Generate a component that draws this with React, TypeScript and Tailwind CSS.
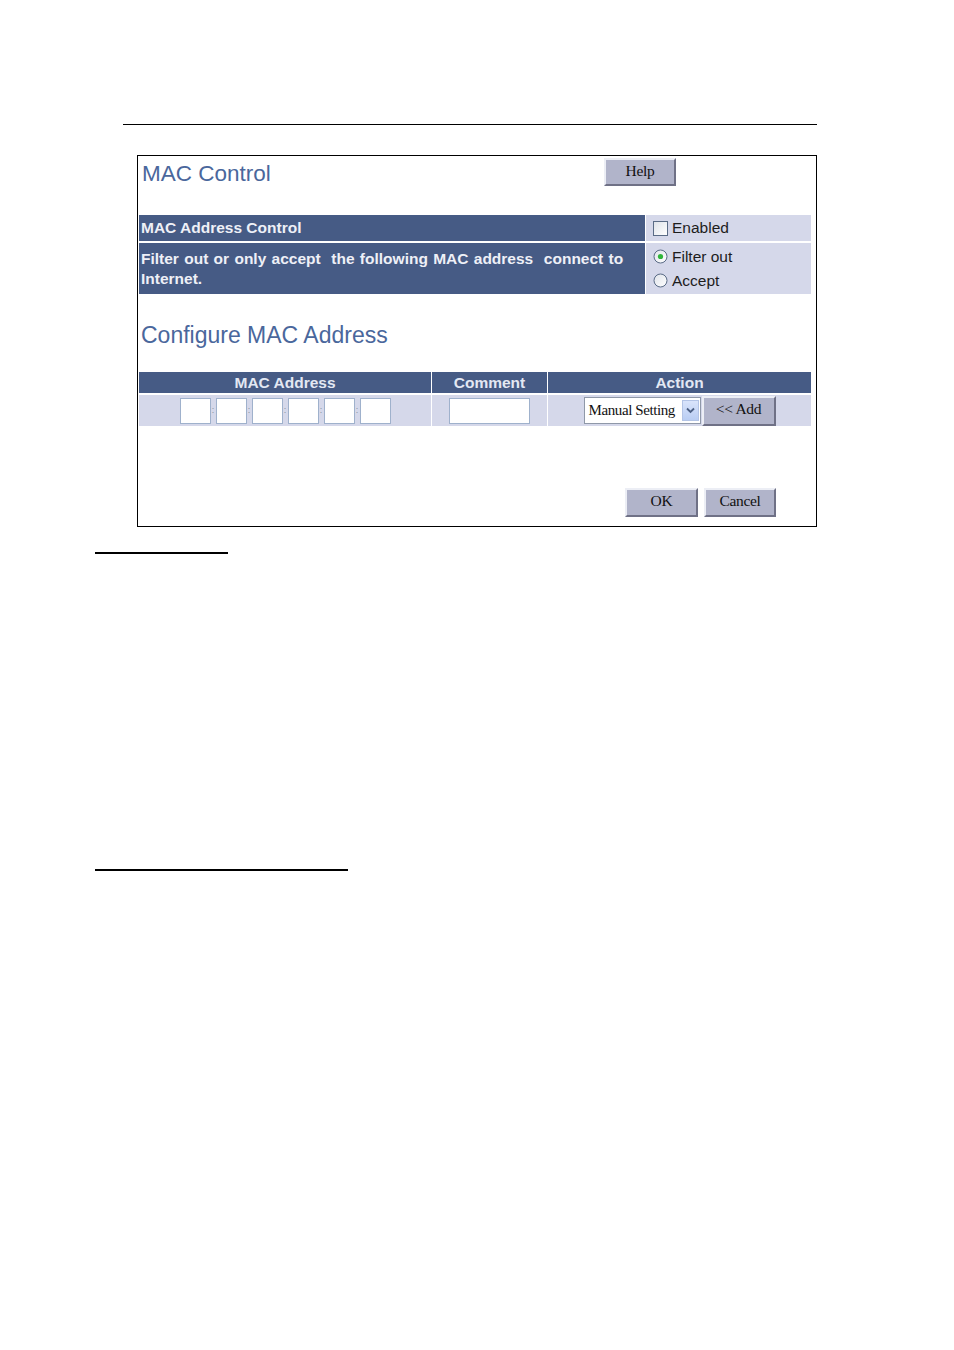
import React from "react";

const sans = { fontFamily: '"Liberation Sans", Arial, sans-serif' };
const serif = { fontFamily: '"Liberation Serif", "Times New Roman", serif' };

function Btn({ label, className = "" }: { label: string; className?: string }) {
  return (
    <div
      className={`flex items-center justify-center bg-[#b1b4ca] border-t-2 border-l-2 border-t-[#eceef5] border-l-[#eceef5] border-b-2 border-r-2 border-b-[#6f7186] border-r-[#6f7186] text-[15.5px] text-[#111] tracking-[-0.3px] ${className}`}
      style={serif}
    >
      {label}
    </div>
  );
}

function Radio({ checked }: { checked?: boolean }) {
  return (
    <svg width="15" height="15" viewBox="0 0 15 15" className="shrink-0">
      <defs>
        <linearGradient id={checked ? "rg1" : "rg2"} x1="0" y1="0" x2="1" y2="1">
          <stop offset="0" stopColor="#dfe3ea" />
          <stop offset="1" stopColor="#ffffff" />
        </linearGradient>
      </defs>
      <circle cx="7.5" cy="7.5" r="6.5" fill={`url(#${checked ? "rg1" : "rg2"})`} stroke="#5a6b86" strokeWidth="1" />
      {checked && <circle cx="7.5" cy="7.5" r="2.6" fill="#2fb53a" />}
    </svg>
  );
}

function MacBox() {
  return <div className="w-[31px] h-[26px] bg-white border border-[#9fb1cc]" />;
}

export default function App() {
  return (
    <div className="relative w-[954px] h-[1350px] bg-white overflow-hidden" style={sans}>
      <div className="pt-[124px]">
        <div className="ml-[123px] w-[694px] h-px bg-black" />
      </div>

      {/* main box */}
      <div className="mt-[30px] ml-[137px] w-[680px] h-[372px] border border-black flex flex-col">
        {/* title row */}
        <div className="flex h-[59px] items-start">
          <div className="w-[466px] pl-[4px] pt-[5px] text-[22.5px] leading-[26px] text-[#4a679c]">MAC Control</div>
          <Btn label="Help" className="w-[72px] h-[28px] mt-[2px] pb-[3px]" />
        </div>

        {/* table 1 */}
        <div className="ml-px w-[672px] flex flex-col gap-[2px]">
          <div className="flex gap-px h-[26px]">
            <div className="w-[506px] bg-[#465b85] text-[#eef0f7] font-bold text-[15.5px] pl-[2px] flex items-center">
              MAC Address Control
            </div>
            <div className="flex-1 bg-[#d5d8ea] flex items-center pl-[7px] gap-[4px] text-[15.5px] text-[#1d1d1d]">
              <div className="w-[15px] h-[15px] border border-[#5a6b86] bg-gradient-to-br from-[#dfe3ea] to-white" />
              <span>Enabled</span>
            </div>
          </div>
          <div className="flex gap-px h-[51px]">
            <div className="w-[506px] bg-[#465b85] text-[#eef0f7] font-bold text-[15.5px] leading-[20px] pl-[2px] flex flex-col justify-center">
              <span className="whitespace-pre [word-spacing:1px]">{"Filter out or only accept  the following MAC address  connect to"}</span>
              <span>Internet.</span>
            </div>
            <div className="flex-1 bg-[#d5d8ea] flex flex-col justify-center pl-[7px] text-[15.5px] leading-[24px] text-[#1d1d1d]">
              <div className="flex items-center gap-[4px]">
                <Radio checked />
                <span>Filter out</span>
              </div>
              <div className="flex items-center gap-[4px]">
                <Radio />
                <span>Accept</span>
              </div>
            </div>
          </div>
        </div>

        {/* configure */}
        <div className="mt-[28px] pl-[3px] text-[23px] leading-[26px] text-[#4a679c]">Configure MAC Address</div>

        {/* table 2 */}
        <div className="mt-[24px] ml-px w-[672px] flex flex-col gap-[2px]">
          <div className="flex gap-px h-[21px] text-[15.5px] font-bold text-[#e3e8f3]">
            <div className="w-[292px] bg-[#465b85] flex items-center justify-center">MAC Address</div>
            <div className="w-[115px] bg-[#465b85] flex items-center justify-center">Comment</div>
            <div className="flex-1 bg-[#465b85] flex items-center justify-center">Action</div>
          </div>
          <div className="flex gap-px h-[31px]">
            <div className="w-[292px] bg-[#d5d8ea] flex items-center justify-center">
              {[0, 1, 2, 3, 4, 5].map((i) => (
                <React.Fragment key={i}>
                  {i > 0 && (
                    <div className="w-[5px] flex justify-center text-[9px] leading-none text-[#8a8fa0]">:</div>
                  )}
                  <MacBox />
                </React.Fragment>
              ))}
            </div>
            <div className="w-[115px] bg-[#d5d8ea] flex items-center justify-center">
              <div className="w-[81px] h-[26px] bg-white border border-[#9fb1cc]" />
            </div>
            <div className="flex-1 bg-[#d5d8ea] flex items-center justify-center">
              <div className="w-[117px] h-[27px] bg-white border border-[#8f98a8] flex items-center justify-between pl-[4px] pr-px">
                <span className="text-[15px] tracking-[-0.4px] text-[#111]" style={serif}>Manual Setting</span>
                <div className="w-[17px] h-[21px] bg-gradient-to-b from-[#d9e4fb] to-[#b9cdf3] border border-[#b3c4e6] flex items-center justify-center">
                  <svg width="9" height="7" viewBox="0 0 9 7">
                    <path d="M1 1.5 L4.5 5 L8 1.5" fill="none" stroke="#4d6185" strokeWidth="1.8" />
                  </svg>
                </div>
              </div>
              <Btn label="<< Add" className="w-[74px] h-[30px] ml-px pb-[3px]" />
            </div>
          </div>
        </div>

        {/* OK / Cancel */}
        <div className="mt-[62px] flex pl-[487px] gap-[6px]">
          <Btn label="OK" className="w-[73px] h-[29px] pb-[3px]" />
          <Btn label="Cancel" className="w-[72px] h-[29px] pb-[3px]" />
        </div>
      </div>

      <div className="mt-[25px] ml-[95px] w-[133px] h-[2px] bg-black" />
      <div className="mt-[315px] ml-[95px] w-[253px] h-[2px] bg-black" />
    </div>
  );
}
